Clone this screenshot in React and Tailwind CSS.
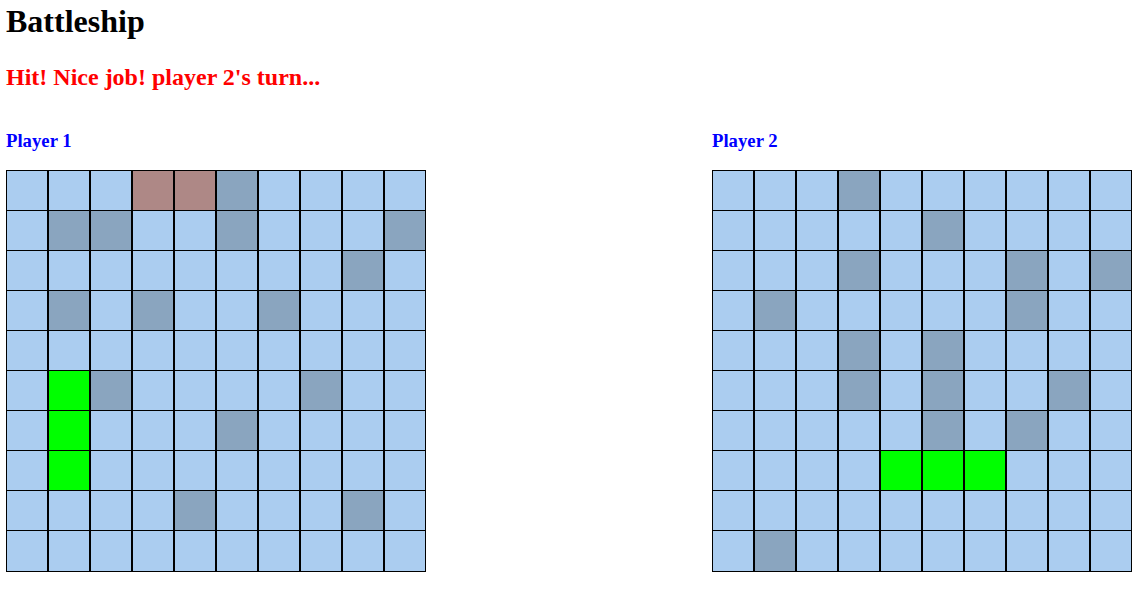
const W = 0, G = 1, H = 2, S = 3;

const p1 = [
  [W, W, W, H, H, G, W, W, W, W],
  [W, G, G, W, W, G, W, W, W, G],
  [W, W, W, W, W, W, W, W, G, W],
  [W, G, W, G, W, W, G, W, W, W],
  [W, W, W, W, W, W, W, W, W, W],
  [W, S, G, W, W, W, W, G, W, W],
  [W, S, W, W, W, G, W, W, W, W],
  [W, S, W, W, W, W, W, W, W, W],
  [W, W, W, W, G, W, W, W, G, W],
  [W, W, W, W, W, W, W, W, W, W],
];

const p2 = [
  [W, W, W, G, W, W, W, W, W, W],
  [W, W, W, W, W, G, W, W, W, W],
  [W, W, W, G, W, W, W, G, W, G],
  [W, G, W, W, W, W, W, G, W, W],
  [W, W, W, G, W, G, W, W, W, W],
  [W, W, W, G, W, G, W, W, G, W],
  [W, W, W, W, W, G, W, G, W, W],
  [W, W, W, W, S, S, S, W, W, W],
  [W, W, W, W, W, W, W, W, W, W],
  [W, G, W, W, W, W, W, W, W, W],
];

const colors = {
  [W]: "bg-[#abcdf0]",
  [G]: "bg-[#8aa5bf]",
  [H]: "bg-[#ae8886]",
  [S]: "bg-[#00ff00]",
};

function Board({ title, data }) {
  return (
    <div className="flex flex-col">
      <h3 className="text-[18.72px] leading-[22px] font-bold text-[#0000ff] mt-[39px]">{title}</h3>
      <div className="mt-[18px] flex flex-col w-[420px]">
        {data.map((row, r) => (
          <div key={r} className="flex">
            {row.map((c, i) => (
              <div
                key={i}
                className={`w-[42px] border-l border-r border-t border-black ${
                  r === 9 ? "border-b h-[42px]" : "h-[40px]"
                } ${colors[c]}`}
              />
            ))}
          </div>
        ))}
      </div>
    </div>
  );
}

export default function App() {
  return (
    <div className="bg-white w-[1147px] h-[594px] px-[6px] text-black" style={{ fontFamily: '"Liberation Serif", "Times New Roman", serif' }}>
      <h1 className="text-[32px] leading-[37px] font-bold pt-[3px]">Battleship</h1>
      <h2 className="text-[24px] leading-[28px] font-bold text-[#ff0000] mt-[23px]">Hit! Nice job! player 2's turn...</h2>
      <div className="flex gap-[286px]">
        <Board title="Player 1" data={p1} />
        <Board title="Player 2" data={p2} />
      </div>
    </div>
  );
}
